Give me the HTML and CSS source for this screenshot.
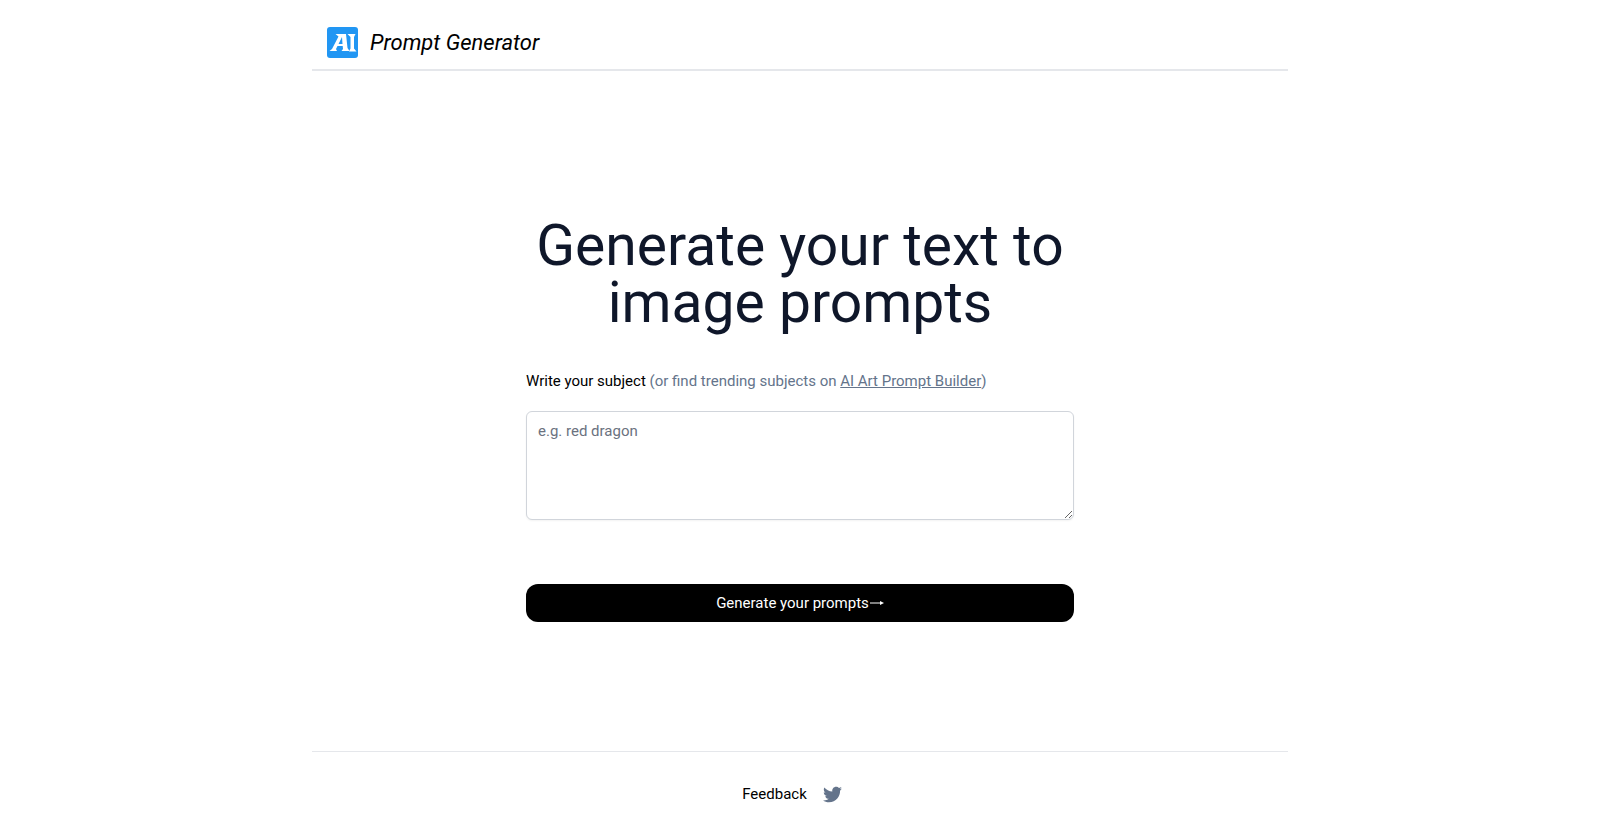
FILE: index.html
```html
<!DOCTYPE html>
<html lang="en">
<head>
<meta charset="utf-8">
<title>Prompt Generator</title>
<meta name="viewport" content="width=device-width, initial-scale=1">
<link rel="stylesheet" href="styles.css">
</head>
<body>
<div class="page">
  <header class="header">
    <a class="brand" href="#">
      <svg class="logo" viewBox="0 0 31 31" aria-hidden="true">
        <rect width="31" height="31" rx="3" fill="#2196f3"/>
        <path fill="#fff" d="M8.500 7H19L20.500 21 22.500 24H14.500L16 22 15.700 19H10.500L9 22 10 24H2.500L5 22 11.500 9.500ZM15 10 11.500 17H15.500Z"/>
        <path fill="#fff" d="M20.500 7H28.500L27 10V21.500L29.500 24.500H22L23.500 21.500V10Z"/>
      </svg>
      <span class="brand-name">Prompt Generator</span>
    </a>
  </header>
  <main class="main">
    <h1 class="title">Generate your text to image prompts</h1>
    <form class="form">
      <div class="prompt-label">
        <label for="subject">Write your subject</label>
        <span class="hint">(or find trending subjects on <a href="#">AI Art Prompt Builder</a>)</span>
      </div>
      <textarea class="subject" id="subject" rows="4" placeholder="e.g. red dragon"></textarea>
      <button class="submit" type="button">Generate your prompts<svg class="arrow" viewBox="0 0 15 8" aria-hidden="true"><path d="M1 4H13" stroke="currentColor"/><path d="M11 2 15 4 11 6Z" fill="currentColor"/></svg></button>
    </form>
  </main>
  <footer class="footer">
    <a class="feedback" href="#">Feedback</a>
    <a class="twitter" href="#" aria-label="Twitter">
      <svg viewBox="0 0 24 24" aria-hidden="true"><path fill="currentColor" d="M24 4.557c-.883.392-1.832.656-2.828.775 1.017-.609 1.798-1.574 2.165-2.724-.951.564-2.005.974-3.127 1.195-.897-.957-2.178-1.555-3.594-1.555-3.179 0-5.515 2.966-4.797 6.045-4.091-.205-7.719-2.165-10.148-5.144-1.290 2.213-.669 5.108 1.523 6.574-.806-.026-1.566-.247-2.229-.616-.054 2.281 1.581 4.415 3.949 4.890-.693.188-1.452.232-2.224.084.626 1.956 2.444 3.379 4.600 3.419-2.070 1.623-4.678 2.348-7.290 2.040 2.179 1.397 4.768 2.212 7.548 2.212 9.142 0 14.307-7.721 13.995-14.646.962-.695 1.797-1.562 2.457-2.549z"/></svg>
    </a>
  </footer>
</div>
</body>
</html>
```
FILE: styles.css
```css
*, *::before, *::after { box-sizing: border-box; }
body {
  margin: 0;
  background: #fff;
  color: #000;
  font: 15px/24px Roboto, "Liberation Sans", sans-serif;
}
a { color: inherit; }
.page {
  display: flex;
  flex-direction: column;
  max-width: 976px;
  min-height: 100vh;
  margin: 0 auto;
}
.header {
  padding: 27px 15px 11px;
  border-bottom: 2px solid #e5e7eb;
}
.brand {
  display: inline-flex;
  align-items: center;
  gap: 12px;
  vertical-align: top;
  text-decoration: none;
}
.logo { width: 31px; height: 31px; }
.brand-name { font-size: 22px; line-height: 31px; font-style: italic; }
.main {
  flex: 1;
  display: flex;
  flex-direction: column;
  align-items: center;
  padding: 146px 16px 64px;
}
.title {
  width: 548px;
  max-width: 100%;
  margin: 0 0 38px;
  color: #0f172a;
  font-size: 57px;
  line-height: 57px;
  font-weight: 400;
  text-align: center;
}
.form {
  display: flex;
  flex-direction: column;
  width: 100%;
  max-width: 548px;
}
.hint { color: #64748b; }
.subject {
  height: 109px;
  margin: 18px 0 64px;
  padding: 7px 11px;
  border: 1px solid #d1d5db;
  border-radius: 6px;
  box-shadow: 0 1px 2px rgb(0 0 0 / 5%);
  background: #fff;
  color: #000;
  font: inherit;
  resize: vertical;
}
.subject::placeholder { color: #6b7280; }
.submit {
  display: flex;
  align-items: center;
  justify-content: center;
  padding: 7px 16px;
  border: 0;
  border-radius: 12px;
  background: #000;
  color: #fff;
  font: inherit;
}
.arrow { width: 15px; height: 8px; }
.footer {
  display: flex;
  align-items: center;
  justify-content: center;
  padding: 30px 16px 28px;
  border-top: 1px solid #e5e7eb;
}
.feedback, .twitter { margin-right: 16px; }
.feedback { text-decoration: none; }
.twitter { display: flex; color: #64748b; }
.twitter svg { width: 19px; height: 19px; }
```
